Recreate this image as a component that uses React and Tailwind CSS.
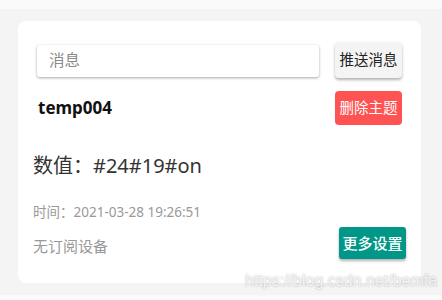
import React from 'react';

const font = { fontFamily: '"Noto Sans", "Noto Sans CJK SC", sans-serif' };

export default function App() {
    return (
        <div className="relative w-[442px] h-[300px] overflow-hidden bg-[#f4f4f4]" style={font}>
            {/* top strip */}
            <div className="h-[9px] bg-[#f9f9f9]" />

            <div className="pl-[18px] pt-[12px]">
                {/* Card */}
                <div className="w-[403px] h-[262px] bg-white rounded-[8px]">
                    <div className="px-[19px] pt-[21px]">
                        <div className="flex items-center gap-[16px]">
                            <div className="flex-1 h-[32px] mt-[2px] bg-white rounded-[3px] shadow-[0_1px_3px_rgba(0,0,0,0.35)] flex items-center px-[12px]">
                                <input
                                    placeholder="消息"
                                    className="w-full bg-transparent text-[15.5px] text-[#333] placeholder:text-[#8a8a8a] outline-none"
                                />
                            </div>
                            <button className="w-[67px] h-[36px] bg-[#f4f4f4] rounded-[4px] shadow-[0_2px_3px_rgba(0,0,0,0.3)] text-[14.5px] text-[#222]">
                                推送消息
                            </button>
                        </div>

                        <div className="flex items-center justify-between mt-[13px]">
                            <span className="text-[17px] font-bold text-[#111] ml-px">temp004</span>
                            <button className="w-[67px] h-[34px] bg-[#ff5252] rounded-[4px] text-[14.5px] text-white">
                                删除主题
                            </button>
                        </div>
                    </div>

                    <div className="px-[15px]">
                        <p className="mt-[27px] h-[28px] leading-[28px] text-[20px] text-[#333]">数值：#24#19#on</p>
                        <p className="mt-[23px] h-[18px] leading-[18px] text-[13.5px] text-[#999]">时间：2021-03-28 19:26:51</p>
                        <div className="flex items-center justify-between mt-[6px]">
                            <span className="mt-[6px] text-[15px] text-[#999]">无订阅设备</span>
                            <button className="w-[67px] h-[32px] bg-[#009688] rounded-[3px] shadow-[0_2px_3px_rgba(0,0,0,0.3)] text-[15px] font-medium text-white">
                                更多设置
                            </button>
                        </div>
                    </div>
                </div>
            </div>

            {/* bottom strip */}
            <div className="absolute left-0 right-0 bottom-0 h-[5px] bg-[#fafafa]" />

            {/* watermark */}
            <span
                className="absolute left-[245px] top-[269px] text-[16px] text-white/80 [text-shadow:0_0_2px_rgba(0,0,0,0.35)]"
                style={{ fontFamily: '"Liberation Sans", Arial, sans-serif' }}
            >
                https://blog.csdn.net/bemfa
            </span>
        </div>
    );
}
